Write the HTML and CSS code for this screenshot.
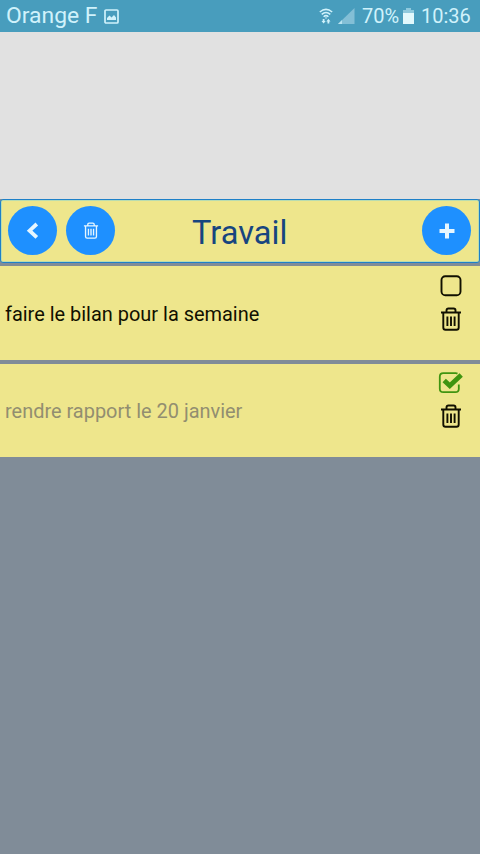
FILE: index.html
```html
<!DOCTYPE html>
<html lang="fr">
<head>
<meta charset="utf-8">
<meta name="viewport" content="width=device-width">
<title>Travail</title>
<link rel="stylesheet" href="styles.css">
</head>
<body>
<svg width="0" height="0" class="defs" aria-hidden="true">
  <symbol id="trash" viewBox="0 0 22 24">
    <path d="M1 5.5H21M6.5 5V3.4Q6.5 1.5 8.4 1.5H13.6Q15.5 1.5 15.5 3.4V5M3.3 6V20.5Q3.3 22.8 5.5 22.8H16.5Q18.7 22.8 18.7 20.5V6M7.4 9.5V19M11 9.5V19M14.6 9.5V19" fill="none" stroke="currentColor" stroke-width="1.9"/>
  </symbol>
</svg>
<div class="status">
  <span class="carrier">Orange F</span>
  <svg class="picture" width="15" height="15" viewBox="0 0 15 15"><rect x="1" y="1" width="13" height="13" rx="1" fill="none" stroke="currentColor" stroke-width="1.7"/><path d="M3 11V9L5.5 6.5 7.5 8.5 10 6 12 8.5V11Z" fill="currentColor"/></svg>
  <svg class="wifi" width="14" height="17" viewBox="0 0 14 17"><path d="M.8 4Q7-1.3 13.2 4M2.7 6.4Q7 2.5 11.3 6.4M4.6 8.7Q7 6.5 9.4 8.7" fill="none" stroke="currentColor" stroke-width="1.5"/><path d="M5.8 9.6H8.2L7 11ZM3.7 11H5.5V13H6.7L4.6 15.6 2.5 13H3.7ZM8.5 15.6V13.4H7.3L9.4 10.8 11.5 13.4H10.3V15.6Z" fill="currentColor"/></svg>
  <svg class="signal" width="17" height="16" viewBox="0 0 17 16"><path d="M0 16 16.5 0V16Z" fill="#83bfd6"/><path d="M0 16 4 12V16Z" fill="#b9e3f0"/></svg>
  <span class="percent">70%</span>
  <svg class="battery" width="11" height="16" viewBox="0 0 11 16"><path d="M3 0H8V2H11V16H0V2H3Z" fill="#8fc9dd"/><path d="M0 5H11V16H0Z" fill="#e2f8fc"/></svg>
  <span class="clock">10:36</span>
</div>
<div class="spacer"></div>
<header class="header">
  <button class="round back" aria-label="Retour"><svg width="14" height="18" viewBox="0 0 14 18"><path d="M10.8 2 3.6 8.7 10.8 15.4" fill="none" stroke="currentColor" stroke-width="3.8"/></svg></button>
  <button class="round" aria-label="Supprimer la liste"><svg width="16" height="17"><use href="#trash"/></svg></button>
  <h1 class="title">Travail</h1>
  <button class="round" aria-label="Ajouter"><svg width="16" height="16" viewBox="0 0 16 16"><path d="M8 .5V15.5M.5 8H15.5" fill="none" stroke="currentColor" stroke-width="4"/></svg></button>
</header>
<main class="list">
  <section class="item">
    <span class="label">faire le bilan pour la semaine</span>
    <span class="actions">
      <svg class="check" width="26" height="22" viewBox="0 0 26 22"><rect x="3.5" y="1.2" width="19" height="19" rx="3.8" fill="none" stroke="currentColor" stroke-width="1.9"/></svg>
      <svg width="22" height="24"><use href="#trash"/></svg>
    </span>
  </section>
  <section class="item done">
    <span class="label">rendre rapport le 20 janvier</span>
    <span class="actions">
      <svg class="check" width="26" height="22" viewBox="0 0 26 22"><path d="M19.5 1.6Q18.7 1.2 17.8 1.2H5.3Q1.8 1.2 1.8 4.7V16.7Q1.8 20.2 5.3 20.2H17.3Q20.8 20.2 20.8 16.7V12.5" fill="none" stroke="currentColor" stroke-width="1.8"/><path d="M6.2 8.4 11.8 13.8 23.2 3" fill="none" stroke="currentColor" stroke-width="4.8"/></svg>
      <svg width="22" height="24"><use href="#trash"/></svg>
    </span>
  </section>
</main>
</body>
</html>
```
FILE: styles.css
```css
* {
  box-sizing: border-box;
}

body {
  margin: 0;
  min-height: 854px;
  background: #808c98;
  font-family: Roboto, sans-serif;
}

svg {
  display: block;
  flex: none;
}

.defs {
  position: absolute;
}

.status {
  display: flex;
  align-items: center;
  height: 32px;
  padding: 0 9px 0 6px;
  background: #489dbd;
  color: #d0f2fb;
  font-size: 20px;
  line-height: 32px;
  white-space: nowrap;
}

.carrier {
  width: 98px;
  font-size: 22.9px;
}

.wifi {
  margin-left: auto;
}

.signal {
  margin-left: 5px;
}

.percent {
  width: 37px;
  margin-left: 7px;
}

.battery {
  margin-left: 4px;
}

.clock {
  width: 50px;
  margin-left: 7px;
}

.spacer {
  height: 167px;
  background: #e1e1e1;
}

.header {
  display: flex;
  align-items: center;
  height: 64px;
  padding: 0 8px 1px 7.4px;
  border: 1px solid #1e80c8;
  border-radius: 3px;
  background: #eee68c;
  box-shadow: inset 0 0 0 1px #b9dcb0;
}

.round {
  display: flex;
  flex: none;
  align-items: center;
  justify-content: center;
  width: 49px;
  height: 49px;
  padding: 0;
  border: 0;
  border-radius: 50%;
  background: #1e90ff;
  color: #e6f6ff;
}

.back {
  margin-right: 9px;
}

.title {
  flex: 1;
  margin: 0;
  padding: 4px 58px 0 0;
  color: #17457f;
  font-size: 32.6px;
  font-weight: 400;
  line-height: 40px;
  text-align: center;
}

.list {
  display: grid;
  gap: 4px;
  padding-top: 3px;
}

.item {
  display: flex;
  align-items: center;
  justify-content: space-between;
  height: 93.5px;
  padding: 0 16px 0 5px;
  background: #eee68c;
  color: #111000;
}

.label {
  padding-top: 2px;
  font-size: 19.95px;
  line-height: 26px;
}

.done .label {
  color: #928e70;
}

.actions {
  display: flex;
  flex-direction: column;
  align-items: center;
  align-self: flex-start;
  gap: 10px;
  padding-top: 9px;
}

.done .actions {
  padding-top: 8px;
}

.done .check {
  color: #3f9410;
}
```
